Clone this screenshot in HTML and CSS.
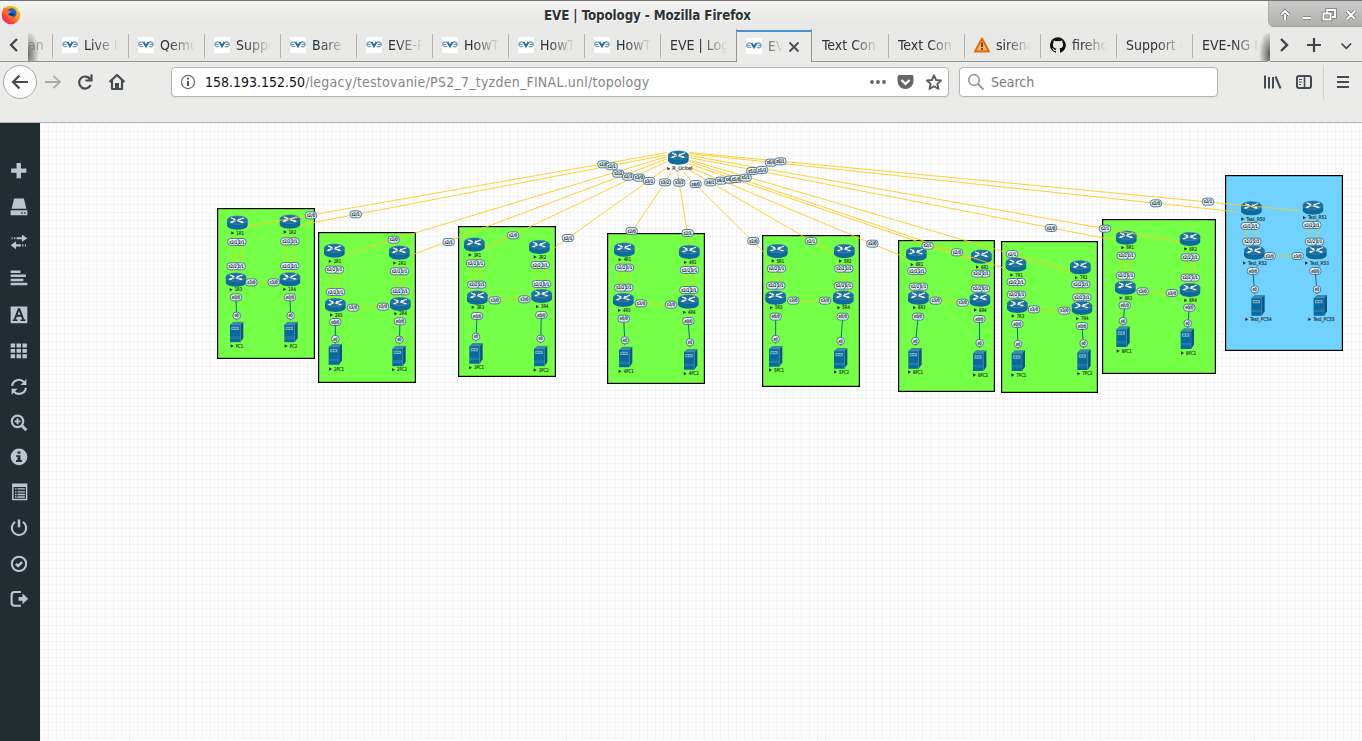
FILE: index.html
```html
<!DOCTYPE html>
<html lang="en">
<head>
<meta charset="utf-8">
<title>EVE | Topology</title>
<link rel="stylesheet" href="styles.css">
</head>
<body>
<svg class="defs" width="0" height="0">
  <defs>
    <linearGradient id="fox" x1="1" y1="0" x2="0" y2="1"><stop offset="0" stop-color="#ffe226"/><stop offset=".4" stop-color="#ff9a1a"/><stop offset=".7" stop-color="#ff3b3f"/><stop offset="1" stop-color="#f2127a"/></linearGradient>
    <symbol id="eve" viewBox="0 0 16 16">
      <rect width="16" height="16" fill="#fff"/>
      <path d="M5.500 5.500C3.500 4.300 .8 5 .8 7.200S3.500 10.400 5.200 9M1 7.300h3.500M10.500 5.500c2-1 4.700-.5 4.700 1.900s-2.700 3-4.400 1.600M11.500 7.300h3" fill="none" stroke="#6f9fc0" stroke-width="1.300"/>
      <path d="M5.500 5 8 9.300 10.500 5" fill="none" stroke="#2d6f9a" stroke-width="2"/>
    </symbol>
    <symbol id="router" viewBox="-32 -23 64 46" preserveAspectRatio="none">
      <path d="M-31-8V9c0 7 14 13 31 13S31 16 31 9V-8z" fill="#0f6a9c"/>
      <ellipse cy="-8" rx="31" ry="13.500" fill="#1f70a0" stroke="#4c93b8" stroke-width="1.500"/>
      <path d="M-19-15-7-10M-1-6 17-1M20-15 4-9M-5-6-19-1" stroke="#e3eef4" stroke-width="3.500"/>
      <path d="m-10-14 7 6-11 1zM14-5l7 5-12 1zM3-13 1-6l11-2zM-17-5l-6 5 12 1z" fill="#fff"/>
    </symbol>
    <symbol id="server" viewBox="-22 -32 44 64">
      <path d="m-20-22 10-9h30l-9 9z" fill="#3d88ac"/>
      <path d="m11-22 9-9V18l-9 13z" fill="#0a5482"/>
      <path d="M-20-22h31v53h-31z" fill="#0869a1"/>
      <path d="M-16-16h22v10h-22z" fill="#74aecb"/>
      <path d="M-13-11h6m3 0h6" stroke="#0b5e90" stroke-width="3"/>
      <path d="M-20 15h31M-20-22h31v53M-20 19h31" fill="none" stroke="#4c92b5" stroke-width="1.500"/>
    </symbol>
  </defs>
</svg>

<div class="window">
  <header class="titlebar">
    <svg class="fox" viewBox="0 0 20 20"><circle cx="10" cy="10.500" r="9.300" fill="url(#fox)"/><path d="M11 2c3 0 5 1 5.500 3.500L19 9c-.5-3-2-5-4-6.500z" fill="#ffdf2e"/><circle cx="10.500" cy="8.800" r="5" fill="#1c62d0"/><path d="M3 2.500 7 6l3 1-3 2.500c1 2.500 4 3 6 1.500-1 3-5 4-8 1.500S1.500 6 3 2.500z" fill="#ff6a28"/><path d="M7.500 9.500 11 8.700l3 .8-2.500 2z" fill="#0b2f78"/></svg>
    <h1>EVE | Topology - Mozilla Firefox</h1>
    <div class="wincontrols">
      <svg viewBox="0 0 92 26"><g fill="none" stroke="#777" stroke-width="3.600"><path d="M15 19v-6M11 14l4-4 4 4M33 17h8M53.500 12.500h7v6h-7zM57 12V9h8v7h-3M77 10l8 8M85 10l-8 8"/></g><g fill="none" stroke="#fff" stroke-width="1.900"><path d="M15 19v-6M11 14l4-4 4 4M33 17h8M53.500 12.500h7v6h-7zM57 12V9h8v7h-3M77 10l8 8M85 10l-8 8"/></g></svg>
    </div>
  </header>

  <nav class="tabbar">
    <div class="scroll-left"><svg viewBox="0 0 28 32"><path d="m16 10-6 6 6 6" fill="none" stroke="#3d4649" stroke-width="2.300"/></svg></div>
    <div class="tabs">
      <div class="tab first"><span class="label">an</span></div>
      <div class="tab"><svg class="fav"><use href="#eve"/></svg><span class="label">Live H</span></div>
      <div class="tab"><svg class="fav"><use href="#eve"/></svg><span class="label">Qemu</span></div>
      <div class="tab"><svg class="fav"><use href="#eve"/></svg><span class="label">Suppo</span></div>
      <div class="tab"><svg class="fav"><use href="#eve"/></svg><span class="label">Bare </span></div>
      <div class="tab"><svg class="fav"><use href="#eve"/></svg><span class="label">EVE-P</span></div>
      <div class="tab"><svg class="fav"><use href="#eve"/></svg><span class="label">HowT</span></div>
      <div class="tab"><svg class="fav"><use href="#eve"/></svg><span class="label">HowT</span></div>
      <div class="tab"><svg class="fav"><use href="#eve"/></svg><span class="label">HowT</span></div>
      <div class="tab"><span class="label text-only">EVE | Log</span></div>
      <div class="tab active"><svg class="fav"><use href="#eve"/></svg><span class="label">EVE</span><svg class="close" viewBox="0 0 12 12"><path d="m1.500 1.500 9 9m0-9-9 9" stroke="#454e51" stroke-width="1.800"/></svg></div>
      <div class="tab plain"><span class="label text-only">Text Con</span></div>
      <div class="tab"><span class="label text-only">Text Con</span></div>
      <div class="tab"><svg class="fav" viewBox="0 0 16 16"><path d="M8 1.500 15 14.500H1z" fill="#fbb55c" stroke="#e4690b" stroke-width="2" stroke-linejoin="round"/><path d="M8 5.500v4.500m0 1.200V13" stroke="#4a3b28" stroke-width="1.800"/></svg><span class="label">sirena</span></div>
      <div class="tab"><svg class="fav" viewBox="0 0 16 16"><path fill="#111" d="M8 .2a8 8 0 0 0-2.500 15.600c.4.100.5-.2.500-.4v-1.500c-2.200.5-2.700-1-2.700-1-.4-.9-.9-1.200-.9-1.200-.7-.5.1-.5.1-.5.8.1 1.200.8 1.200.8.7 1.300 1.900.9 2.300.7.100-.5.300-.9.500-1.100-1.800-.2-3.600-.9-3.600-4 0-.9.300-1.600.8-2.100-.1-.2-.4-1 .1-2.100 0 0 .7-.2 2.200.8a7.500 7.500 0 0 1 4 0c1.500-1 2.200-.8 2.200-.8.4 1.100.2 1.900.1 2.100.5.600.8 1.300.8 2.100 0 3.100-1.900 3.700-3.700 3.900.3.300.6.800.6 1.500v2.300c0 .2.100.5.600.4A8 8 0 0 0 8 .2z"/></svg><span class="label">fireho</span></div>
      <div class="tab"><span class="label text-only">Support a</span></div>
      <div class="tab"><span class="label text-only">EVE-NG L</span></div>
    </div>
    <div class="tabtools">
      <svg viewBox="0 0 92 32"><g fill="none" stroke="#3d4649"><path d="m11 10 6 6-6 6" stroke-width="2.400"/><path d="M44 9v14M37 16h14" stroke-width="2.200"/><path d="m71.500 14.500 4.800 4.800 4.800-4.800" stroke-width="1.700"/></g></svg>
    </div>
  </nav>

  <div class="toolbar">
    <div class="navbuttons">
      <svg viewBox="0 0 140 42"><circle cx="20" cy="20" r="16.500" fill="#fbfbfb" stroke="#a8a8a6"/><g fill="none" stroke="#454c50" stroke-width="2.200"><path d="M28 20H13m6.500-6.500L13 20l6.500 6.500"/><path d="M45 20h15m-6.500-6L60 20l-6.500 6" stroke="#aaa" stroke-width="1.800"/><path d="M90 17a6 6 0 1 0 .6 6M91.500 12.500v6h-6"/><path d="m109.500 20 7.500-7 7.500 7M112 18v9h10v-9" stroke-linejoin="round"/></g><path d="M115 21h4v7h-4z" fill="#454c50"/></svg>
    </div>
    <div class="urlbar">
      <svg class="info" viewBox="0 0 16 16"><circle cx="8" cy="8" r="6.600" fill="none" stroke="#6a6a6a" stroke-width="1.200"/><path d="M8 3.800v1.800M8 7v5" stroke="#555" stroke-width="2"/></svg>
      <span class="url"><b>158.193.152.50</b>/legacy/testovanie/PS2_7_tyzden_FINAL.unl/topology</span>
      <svg class="urlicons" viewBox="0 0 82 26"><g fill="#666"><circle cx="5" cy="13" r="1.900"/><circle cx="11" cy="13" r="1.900"/><circle cx="17" cy="13" r="1.900"/><path d="M32 6h13q1.500 0 1.500 1.500V12a8 8 0 0 1-16 0V7.500Q30.500 6 32 6z"/></g><path d="m34.500 11 4 4 4-4" fill="none" stroke="#fff" stroke-width="2.200"/><path d="m67 6.300 2.100 4.700 5 .5-3.800 3.400 1.200 5-4.500-2.700-4.500 2.700 1.200-5-3.800-3.400 5-.5z" fill="none" stroke="#5d5d5d" stroke-width="1.900" stroke-linejoin="round"/></svg>
    </div>
    <div class="search"><svg viewBox="0 0 18 18"><circle cx="7" cy="7" r="5.300" fill="none" stroke="#999" stroke-width="1.700"/><path d="m11 11 5.500 5.500" stroke="#999" stroke-width="2"/></svg><span>Search</span></div>
    <div class="menubuttons">
      <svg viewBox="0 0 112 42"><g fill="none" stroke="#454c50"><path d="M15 13.500v13M19 15v11.500M23 15v11.500M25.500 14.500l5 12" stroke-width="2"/><rect x="47" y="14" width="14" height="12" rx="2" stroke-width="2"/><path d="M54.500 14v12" stroke-width="1.600"/><path d="M49 17.500h3m-3 2.500h3m-3 2.500h2" stroke-width="1"/><path d="M87 15h12M87 20h12M87 25h12" stroke-width="2"/></g><path d="M73.500 3v34" stroke="#d0d0ce"/></svg>
    </div>
  </div>

  <main class="page">
    <aside class="sidebar">
      <svg viewBox="0 0 18 18"><path d="M6.500 1h4.500v5.500H16.500V11H11v5.500H6.500V11H1V6.500h5.500z"/></svg>
      <svg viewBox="0 0 18 18"><path d="M4 .5h10L16.500 11h-15z"/><path d="M.5 12.500h17v5H.500zm10.700 2v1.500h1.500v-1.500zm3 0v1.500h1.500v-1.500z" fill-rule="evenodd"/></svg>
      <svg viewBox="0 0 18 18"><path d="M1.500 4.200h1v2.200h-1zM4 4.200h1.200v2.200H4zM6.500 4.200H12V1.500l5.500 4L12 9V6.400H6.500zM6 8.500.500 12.500l5.500 4V13.700h5v-2.200H6zM12.300 11.500h1.200v2.200h-1.200zM15 11.500h1v2.200h-1z"/></svg>
      <svg viewBox="0 0 18 18"><path d="M.5 1.500h10V4H.500zM.5 5.700h15.500v2.500H.500zM.5 9.900h13v2.500H.500zM.5 14.100h17v2.500H.500z"/></svg>
      <svg viewBox="0 0 18 18"><path d="M.5.500h17v17H.500z"/><path d="M9 2.500 4.500 14M9 2.500l4.500 11.500M6.500 10h5" fill="none" stroke="#222d32" stroke-width="2"/><path d="M2.500 14.500h5M10.500 14.500h5" stroke="#222d32" stroke-width="1.500"/></svg>
      <svg viewBox="0 0 18 18"><path d="M.5 1.500h4.500v4H.500zm6 0H11v4H6.500zm6 0H17v4h-4.500zM.5 7h4.500v4H.500zm6 0H11v4H6.500zm6 0H17v4h-4.500zM.5 12.500h4.500v4H.500zm6 0H11v4H6.500zm6 0H17v4h-4.500z"/></svg>
      <svg class="low" viewBox="0 0 18 18"><path d="M2 8a7 7 0 0 1 12-4M16 10a7 7 0 0 1-12 4" fill="none" stroke="#b8c7ce" stroke-width="2.200"/><path d="M16.500 1v6h-6zM1.500 17v-6h6z"/></svg>
      <svg class="zoomer" viewBox="0 0 18 18"><circle cx="7.500" cy="7.500" r="5.800" fill="none" stroke="#b8c7ce" stroke-width="2.200"/><path d="M6.500 4.500h2v2h2v2h-2v2h-2v-2h-2v-2h2z"/><path d="m12 12 4.500 4.500" stroke="#b8c7ce" stroke-width="3"/></svg>
      <svg viewBox="0 0 18 18"><circle cx="9" cy="9" r="8.500"/><path d="M7.500 3.500h3v2.300h-3zM6 7.300h4.500v5H12v2H6v-2h1.500V9H6z" fill="#222d32"/></svg>
      <svg viewBox="0 0 18 18"><path d="M2 .5h15.500v17H2zM3.500 4v12H16V4z" fill-rule="evenodd"/><path d="M5 6h1.500M7.500 6H15M5 9h1.500m1 0H15M5 11.700h1.500m1 0H15M5 14.300h1.500m1 0H15" stroke="#b8c7ce" stroke-width="1.400"/></svg>
      <svg viewBox="0 0 18 18"><path d="M5 3a7.300 7.300 0 1 0 8 0" fill="none" stroke="#b8c7ce" stroke-width="2.200"/><path d="M7.700.5h2.600v8H7.700z"/></svg>
      <svg viewBox="0 0 18 18"><circle cx="9" cy="9" r="7.300" fill="none" stroke="#b8c7ce" stroke-width="2.100"/><path d="m5.800 9 2.300 2.200 4-4" fill="none" stroke="#b8c7ce" stroke-width="2.600"/></svg>
      <svg viewBox="0 0 18 18"><path d="M11 2H4.500Q1.500 2 1.500 5v8q0 3 3 3H11" fill="none" stroke="#b8c7ce" stroke-width="2.200"/><path d="M8.500 7h4V3.500L18.500 9l-6 5.500V11h-4z"/></svg>
    </aside>
    <svg class="topology" id="topology" viewBox="40 123 1322 618"></svg>
  </main>
</div>
<script src="topology.js"></script>
</body>
</html>
```
FILE: styles.css
```css
* { box-sizing: border-box; }
body { margin: 0; overflow: hidden; font-family: "DejaVu Sans Condensed", "DejaVu Sans", sans-serif; font-stretch: condensed; font-size: 14px; color: #2e3436; }
svg { display: block; }
.defs { position: absolute; }
.window { width: 1362px; height: 741px; display: flex; flex-direction: column; background: #e8e8e6; }

.titlebar { height: 29px; flex: none; display: grid; grid-template-columns: 94px 1fr 94px; border-top: 1px solid #747073; background: linear-gradient(#f3f3f2, #e8e8e6 22px); }
.fox { width: 20px; height: 21px; margin: 3px 0 0 1px; }
.titlebar h1 { margin: 0; padding-right: 67px; font-size: 13.300px; letter-spacing: -.12px; line-height: 29px; text-align: center; white-space: nowrap; text-shadow: 1px 1px 0 #fff; }
.wincontrols { height: 26px; width: 94px; border-radius: 0 0 0 6px; background: linear-gradient(#cbcbca, #b0b0ae); border-bottom: 1px solid #9e9e9c; border-left: 1px solid #aaa; padding-left: 1px; }
.wincontrols svg { width: 92px; height: 26px; }

.tabbar { height: 33px; flex: none; display: flex; background: #e8e8e6; }
.scroll-left, .tabtools { flex: none; border-bottom: 1px solid #949492; }
.scroll-left { width: 28px; }
.scroll-left svg { width: 28px; height: 32px; margin-left: 1px; }
.tabtools { width: 92px; }
.tabtools svg { width: 92px; height: 32px; }
.tabs { width: 1242px; flex: none; display: flex; overflow: hidden; position: relative; }
.tabs::before, .tabs::after { content: ""; position: absolute; top: 4px; bottom: 1px; width: 11px; }
.tabs::before { left: 0; background: radial-gradient(ellipse 11px 24px at 0 75%, rgba(40,40,40,.65), transparent); }
.tabs::after { right: 0; background: radial-gradient(ellipse 11px 24px at 100% 75%, rgba(40,40,40,.75), transparent); }
.tab { width: 76px; flex: none; height: 33px; display: flex; align-items: center; padding: 0 9px 1px 9px; border-bottom: 1px solid #949492; background: linear-gradient(#b2b2b0, #b2b2b0) 0 5px / 1px 24px no-repeat; }
.tab.first { width: 24px; padding: 0 7px 1px 0; color: #777; background: none; }
.tab.plain { background: none; }
.tab.active { border: 1px solid #949492; border-bottom: 0; border-top: 0; padding: 0 10px 0 8px; background: linear-gradient(#4a90d9, #4a90d9) 0 1px / 100% 2px no-repeat #ebebe9; }
.fav { width: 16px; height: 16px; flex: none; margin: 1px 6px 0 1px; }
.label { flex: 1; min-width: 0; font-size: 14px; white-space: pre; overflow: hidden; -webkit-mask-image: linear-gradient(90deg, #000 calc(100% - 26px), transparent); mask-image: linear-gradient(90deg, #000 calc(100% - 26px), transparent); }
.text-only { margin-left: 1px; }
.first .label { -webkit-mask-image: none; mask-image: linear-gradient(90deg, #000, rgba(0,0,0,.4)); }
.active .label { -webkit-mask-image: none; mask-image: linear-gradient(90deg, #000 -6px, transparent); }
.close { width: 12px; height: 12px; flex: none; margin: 3px 1px 0 5px; }

.toolbar { height: 61px; flex: none; display: flex; background: #ebebe9; border-bottom: 1px solid #b5b5b3; }
.navbuttons { width: 171px; flex: none; }
.navbuttons svg { width: 140px; height: 42px; }
.urlbar, .search { height: 30px; margin-top: 5px; flex: none; display: flex; align-items: center; border: 1px solid #b5b5b3; border-radius: 4px; background: #fff; box-shadow: 0 1px 2px #ddd; }
.urlbar { width: 778px; padding-left: 8px; }
.info { width: 16px; height: 16px; flex: none; }
.url { flex: 1; margin-left: 9px; color: #858585; white-space: nowrap; font-size: 14px; letter-spacing: .24px; }
.url b { font-weight: normal; color: #111; letter-spacing: 0; }
.urlicons { width: 82px; height: 26px; flex: none; margin-right: -1px; }
.search { width: 259px; margin-left: 10px; padding-left: 7px; color: #7c7c7c; }
.search svg { width: 18px; height: 18px; margin-right: 6px; }
.menubuttons { margin-left: 32px; }
.menubuttons svg { width: 112px; height: 42px; }
.menubuttons, .navbuttons { height: 42px; }

.page { flex: 1; display: flex; min-height: 0; }
.sidebar { width: 40px; flex: none; background: #222d32; display: flex; flex-direction: column; gap: 18px; padding: 39px 0 0 10px; }
.sidebar svg { width: 18px; height: 17.700px; flex: none; fill: #b8c7ce; overflow: visible; }
.sidebar svg:nth-child(n+5) { transform: translateY(1px); }
.sidebar svg:nth-child(6), .sidebar svg:nth-child(7), .sidebar svg:nth-child(8) { transform: translateY(2px); }
.sidebar svg:nth-child(n+9) { transform: none; }
.topology { width: 1322px; height: 618px; flex: none; background-color: #fff; background-image: linear-gradient(#f3f3f3 1px, transparent 1px), linear-gradient(90deg, #f3f3f3 1px, transparent 1px), linear-gradient(#fafafa 1px, transparent 1px), linear-gradient(90deg, #fafafa 1px, transparent 1px); background-size: 8.100px 8.100px, 8.100px 8.100px, 4.050px 4.050px, 4.050px 4.050px; }
.topology text { font-family: "DejaVu Sans Condensed", "DejaVu Sans", sans-serif; }
.zone { stroke: #000; stroke-width: 1.200; }
.serial { stroke: #ffcb1c; stroke-width: .9; fill: none; }
.inner-serial { stroke: #e0cd10; stroke-width: 2.800; }
.ethernet { stroke: #0a6a92; stroke-width: 3; }
.pill { fill: #e9f0f6; stroke: #3b7290; stroke-width: 2.700; }
.pill-text { font-size: 14.500px; fill: #14191c; stroke: #14191c; stroke-width: .5; text-anchor: middle; }
.node-name { font-size: 15.500px; fill: #1c2a22; stroke: #1c2a22; stroke-width: .4; }
.arrow { fill: #222a26; }
```
FILE: topology.js
```js
const svg = document.getElementById('topology');
const out = [];

// Drawing units inside a lab are one third of a page pixel.
function pill(x, y, text) {
  const w = text.length > 2 ? 34 : 22;
  return `<rect class="pill" x="${x - w / 2}" y="${y - 10.5}" width="${w}" height="21" rx="9"/>` +
    `<text class="pill-text" x="${x}" y="${y + 5.3}" textLength="${w - 9}" lengthAdjust="spacingAndGlyphs">${text}</text>`;
}
function line(cls, x1, y1, x2, y2) {
  return `<line class="${cls}" x1="${x1}" y1="${y1}" x2="${x2}" y2="${y2}"/>`;
}
function name(x, y, text) {
  const w = text.startsWith('Test') ? text.length * 7.1 : text.length * 7.5;
  return `<path class="arrow" d="M${x - 4} ${y - 5}l9 5-9 5z"/>` +
    `<text class="node-name" x="${x + 11}" y="${y + 5.5}" textLength="${w}" lengthAdjust="spacingAndGlyphs">${text}</text>`;
}
function router(x, y) {
  return `<use href="#router" x="${x - 32}" y="${y - 22}" width="64" height="44"/>`;
}
function server(x, y) {
  return `<use href="#server" x="${x - 22}" y="${y - 32}" width="44" height="64"/>`;
}

const labs = [
  { box: [217, 208, 98, 151], o: [210, 195], names: ['1R1', '1R2', '1R3', '1R4', 'PC1', 'PC2'],
    nodes: [[82, 83], [240, 80], [78, 254], [240, 253], [80, 411], [243, 411]],
    labels: [[68, 114], [225, 111], [63, 284], [224, 283], [66, 453], [228, 453]],
    pairs: [[80, 141], [78, 214], [239, 139], [239, 213]], s3: [[124, 262], [191, 262]],
    eth: [[78, 307], [80, 362], [240, 307], [242, 362]] },
  { box: [318, 232, 98, 151], o: [210, 195], names: ['2R1', '2R2', '2R3', '2R4', '2PC1', '2PC2'],
    nodes: [[373, 167], [568, 173], [376, 330], [571, 327], [376, 478], [567, 483]],
    labels: [[360, 199], [554, 204], [364, 360], [557, 356], [361, 522], [550, 524]],
    pairs: [[373, 224], [376, 291], [568, 229], [570, 289]], s3: [[429, 338], [519, 335]],
    eth: [[376, 381], [376, 432], [570, 379], [568, 434]] },
  { box: [458, 226, 98, 151], o: [440, 215], names: ['3R1', '3R2', '3R3', '3R4', '3PC1', '3PC2'],
    nodes: [[103, 89], [298, 96], [112, 248], [305, 243], [108, 415], [302, 423]],
    labels: [[90, 120], [285, 126], [99, 277], [292, 275], [91, 458], [285, 465]],
    pairs: [[106, 145], [110, 209], [300, 150], [304, 207]], s3: [[164, 256], [253, 253]],
    eth: [[111, 303], [108, 365], [304, 300], [302, 371]] },
  { box: [607, 233, 98, 151], o: [440, 215], names: ['4R1', '4R2', '4R3', '4R4', '4PC1', '4PC2'],
    nodes: [[553, 104], [748, 111], [550, 255], [745, 260], [557, 426], [752, 433]],
    labels: [[540, 134], [736, 142], [538, 286], [733, 292], [540, 469], [735, 476]],
    pairs: [[553, 158], [551, 218], [748, 165], [746, 225]], s3: [[603, 265], [693, 269]],
    eth: [[551, 311], [555, 376], [745, 318], [750, 382]] },
  { box: [762, 235, 98, 152], o: [750, 225], names: ['5R1', '5R2', '5R3', '5R4', '5PC1', '5PC2'],
    nodes: [[82, 78], [283, 78], [77, 218], [280, 218], [77, 394], [272, 400]],
    labels: [[69, 108], [271, 108], [64, 248], [266, 248], [61, 435], [256, 441]],
    pairs: [[79, 131], [77, 182], [281, 131], [280, 182]], s3: [[130, 227], [225, 227]],
    eth: [[77, 275], [77, 342], [278, 275], [272, 348]] },
  { box: [898, 240, 97, 152], o: [750, 225], names: ['6R1', '6R2', '6R3', '6R4', '6PC1', '6PC2'],
    nodes: [[499, 87], [694, 95], [505, 218], [690, 224], [495, 400], [689, 407]],
    labels: [[486, 119], [682, 126], [493, 248], [676, 255], [478, 441], [673, 450]],
    pairs: [[500, 138], [505, 185], [692, 146], [691, 191]], s3: [[557, 227], [638, 233]],
    eth: [[504, 275], [496, 348], [688, 282], [689, 354]] },
  { box: [1001, 241, 97, 152], o: [990, 195], names: ['7R1', '7R2', '7R3', '7R4', '7PC1', '7PC2'],
    nodes: [[78, 209], [271, 217], [82, 333], [276, 339], [85, 497], [282, 494]],
    labels: [[65, 240], [259, 248], [69, 363], [262, 371], [68, 540], [266, 536]],
    pairs: [[78, 261], [79, 299], [272, 268], [275, 307]], s3: [[132, 343], [223, 347]],
    eth: [[82, 387], [84, 447], [276, 393], [281, 445]] },
  { box: [1102, 219, 114, 155], o: [990, 195], names: ['8R1', '8R2', '8R3', '8R4', '8PC1', '8PC2'],
    nodes: [[409, 128], [600, 132], [406, 278], [600, 285], [399, 425], [592, 431]],
    labels: [[398, 158], [587, 162], [393, 309], [587, 316], [384, 468], [577, 474]],
    pairs: [[408, 182], [406, 242], [600, 187], [600, 248]], s3: [[458, 289], [546, 294]],
    eth: [[404, 331], [399, 378], [598, 338], [593, 385]] },
  { box: [1225, 175, 118, 176], fill: '#71d2ff', o: [1215, 170],
    names: ['Test_R50', 'Test_R51', 'Test_R52', 'Test_R53', 'Test_PC54', 'Test_PC55'],
    nodes: [[109, 115], [294, 113], [118, 248], [304, 247], [129, 406], [316, 406]],
    labels: [[83, 147], [268, 143], [88, 279], [274, 279], [95, 448], [284, 448]],
    pairs: [[105, 168], [110, 215], [290, 165], [298, 215]], s3: [[164, 258], [248, 258]],
    eth: [[114, 303], [119, 358], [301, 303], [306, 358]] },
];

// Zones and node icons
for (const l of labs) {
  const [x, y, w, h] = l.box;
  out.push(`<rect class="zone" x="${x + .6}" y="${y + .6}" width="${w - 1.2}" height="${h - 1.2}" fill="${l.fill || '#76ff47'}"/>`);
}
for (const l of labs) {
  let g = '';
  const p = l.pairs;
  for (const [a, b] of [[p[0], p[1]], [p[2], p[3]]]) {
    g += line('inner-serial', a[0] - 11, a[1] - 18, b[0] - 10, b[1] + 18);
    g += line('inner-serial', a[0] + 12, a[1] - 18, b[0] + 12, b[1] + 18);
  }
  g += line('inner-serial', ...l.s3[0], ...l.s3[1]);
  g += line('ethernet', ...l.eth[0], l.eth[1][0], l.eth[1][1] + 14);
  g += line('ethernet', ...l.eth[2], l.eth[3][0], l.eth[3][1] + 14);
  l.nodes.forEach(([nx, ny], i) => { g += i < 4 ? router(nx, ny) : server(nx, ny); });
  l.labels.forEach(([lx, ly], i) => { g += name(lx, ly, l.names[i]); });
  out.push(`<g transform="translate(${l.o[0]} ${l.o[1]}) scale(.33333)">${g}</g>`);
}

// Uplinks from the teacher router to every lab
const uplinks = [
  [666.7, 152.7, 248, 226], [666.7, 155, 300.5, 225],
  [666.7, 156.7, 345.7, 254], [666.7, 159, 411, 255.3],
  [666.7, 161.5, 486, 247.7], [668, 167, 551.7, 249.7],
  [671.7, 172.3, 625, 242.3], [677.5, 172.3, 689, 242.7],
  [683.3, 172.3, 766, 254.3], [689.3, 170, 834, 254.3],
  [689.3, 167, 905.7, 257.7], [689.3, 164, 970, 259.3],
  [689.3, 161.5, 1004, 268.3], [689.3, 160, 1070, 271],
  [689.3, 157.5, 1115, 240.3], [689.3, 155.5, 1179, 241.7],
  [689.3, 153.7, 1239, 212], [689.3, 152.5, 1300, 210.7],
];
for (const u of uplinks) out.push(line('serial', ...u));

// Port badges inside the labs
for (const l of labs) {
  let g = '';
  for (const [x, y] of l.pairs) g += pill(x + 11, y, 's2/1') + pill(x - 10, y, 's2/2');
  for (const [x, y] of l.s3) g += pill(x, y, 's3/0');
  l.eth.forEach(([x, y], i) => { g += pill(x, y, i % 2 ? 'e0' : 'e0/0'); });
  out.push(`<g transform="translate(${l.o[0]} ${l.o[1]}) scale(.33333)">${g}</g>`);
}

// Teacher router with its port badges
let hub = router(265, 53) + name(236, 86, 'R_Ucitel');
for (const [x, y, t] of [
  [40, 73, 's2/0'], [65, 79, 's2/1'], [85, 101, 's2/2'], [114, 110, 's2/3'], [147, 113, 's3/0'], [177, 123, 's3/1'],
  [225, 127, 's3/2'], [268, 128, 's3/3'], [317, 132, 's4/0'], [361, 127, 's4/1'], [393, 122, 's4/2'], [420, 119, 's4/3'],
  [438, 117, 's5/0'], [467, 113, 's5/1'], [487, 93, 's5/2'], [516, 90, 's5/3'], [543, 68, 's6/0'], [571, 64, 's6/1']]) hub += pill(x, y, t);
out.push(`<g transform="translate(590 140) scale(.33333)">${hub}</g>`);

// Lab-side badges of the uplinks
for (const [ox, oy, list] of [
  [210, 195, [[303, 61, 's2/0'], [437, 58, 's2/1'], [551, 134, 's2/0']]],
  [440, 215, [[26, 81, 's2/1'], [219, 61, 's2/0'], [384, 69, 's2/1'], [575, 48, 's2/0'], [743, 54, 's2/1']]],
  [750, 225, [[10, 48, 's2/0'], [183, 48, 's2/1'], [367, 56, 's2/0'], [533, 62, 's2/1'], [621, 82, 's2/0']]],
  [990, 195, [[66, 177, 's2/1'], [183, 99, 's2/0'], [345, 101, 's2/1'], [498, 25, 's2/0'], [654, 20, 's2/1']]],
]) out.push(`<g transform="translate(${ox} ${oy}) scale(.33333)">${list.map(a => pill(...a)).join('')}</g>`);

svg.innerHTML = out.join('');
```
